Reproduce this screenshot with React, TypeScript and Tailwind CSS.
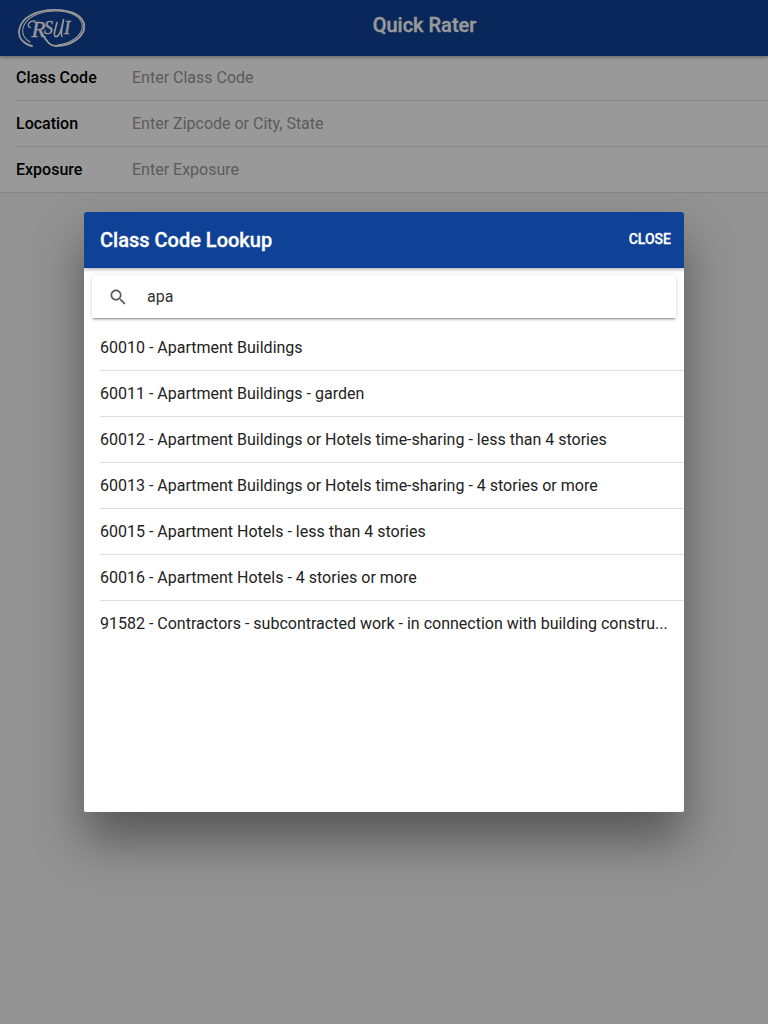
const fields = [
  { label: 'Class Code', placeholder: 'Enter Class Code' },
  { label: 'Location', placeholder: 'Enter Zipcode or City, State' },
  { label: 'Exposure', placeholder: 'Enter Exposure' },
];

const results = [
  '60010 - Apartment Buildings',
  '60011 - Apartment Buildings - garden',
  '60012 - Apartment Buildings or Hotels time-sharing - less than 4 stories',
  '60013 - Apartment Buildings or Hotels time-sharing - 4 stories or more',
  '60015 - Apartment Hotels - less than 4 stories',
  '60016 - Apartment Hotels - 4 stories or more',
  '91582 - Contractors - subcontracted work - in connection with building constru...',
];

function Logo() {
  return (
    <svg width="68" height="40" viewBox="0 0 68 40" fill="none" stroke="#fff" strokeLinecap="round" className="block">
      <path d="M14 38.200C5 35.500 0 29.500 1.200 22C3 9.500 18 1.800 37 1.800C54 1.800 66.300 8 66.300 18.500C66.300 29 53 38 38 38C31 38 28.500 32.500 23.500 25" strokeWidth="1.800" />
      <path d="M12 34C3.800 29 3 22 7 15.500C12 7.500 24 3 38 3C53 3 63.800 9 64.300 17.500C64.800 27 54 35.500 39.500 37" strokeWidth="1.100" />
      <path d="M12.300 19.500C8.500 18.500 10 12.500 17 12.800" strokeWidth="1.300" />
      <g fill="#fff" strokeWidth="0.300" fontFamily="'Liberation Serif', serif" fontStyle="italic">
        <text x="13.500" y="28.500" fontSize="23">R</text>
        <text x="26" y="25.500" fontSize="18">S</text>
        <text x="46" y="26" fontSize="19">I</text>
      </g>
      <path d="M39 14.500C37.700 20 34.500 28.300 37.800 28.600C41.500 28.800 44 20 45.500 11.500M45.300 13C44 20 42.300 27 44 28.500" strokeWidth="1.600" />
    </svg>
  );
}

export default function App() {
  return (
    <div className="relative h-screen w-full overflow-hidden bg-[#f4f4f4] font-['Roboto',sans-serif] text-base">
      <header className="relative z-10 flex h-14 bg-[#0f4296] shadow-[0_1px_4px_rgba(0,0,0,0.4)]">
        <div className="w-[106px] shrink-0 pt-2 pl-[18px]">
          <Logo />
        </div>
        <h1 className="flex-1 pt-[10px] pr-[25px] text-center text-xl leading-[30px] font-medium text-white [-webkit-text-stroke:0.3px_#fff]">Quick Rater</h1>
      </header>
      <form className="border-b border-[#dedede] bg-white">
        {fields.map((field, i) => (
          <div key={field.label} className="pl-4">
            <label className={`flex items-center ${i === 0 ? 'h-[45px] border-b border-[#dedede]' : i === 1 ? 'h-[46px] border-b border-[#dedede]' : 'h-[45px]'}`}>
              <span className="w-[116px] font-medium text-black">{field.label}</span>
              <input className="min-w-0 flex-1 bg-transparent outline-none placeholder:text-[#999]" placeholder={field.placeholder} />
            </label>
          </div>
        ))}
      </form>

      <div className="absolute inset-0 z-20 flex items-center justify-center bg-black/40">
        <section role="dialog" aria-label="Class Code Lookup" className="flex h-[600px] w-[600px] flex-col overflow-hidden rounded-[2px] bg-white shadow-[0_28px_48px_rgba(0,0,0,0.4)]">
          <div className="flex h-14 shrink-0 items-center justify-between bg-[#0f4296] pr-[13px] pl-4 text-white shadow-[0_1px_4px_rgba(0,0,0,0.4)]">
            <h2 className="text-xl font-medium [-webkit-text-stroke:0.3px_#fff]">Class Code Lookup</h2>
            <button type="button" className="pb-[2px] text-sm font-medium [-webkit-text-stroke:0.3px_#fff]">CLOSE</button>
          </div>
          <div className="px-2 pt-2 pb-[7px]">
            <label className="flex h-[42px] items-center rounded-[2px] bg-white pl-4 shadow-[0_2px_2px_0_rgba(0,0,0,0.14),0_3px_1px_-2px_rgba(0,0,0,0.2),0_1px_5px_0_rgba(0,0,0,0.12)]">
              <svg width="20" height="20" viewBox="0 0 512 512" fill="#5b5b5b" className="mr-[19px]">
                <path d="M337.509 305.372h-17.501l-6.571-5.486c20.791-25.232 33.922-57.054 33.922-93.257C347.358 127.632 283.896 64 205.135 64 127.452 64 64 127.632 64 206.629s63.452 142.628 142.225 142.628c35.011 0 67.831-13.167 92.991-34.008l6.561 5.487v17.551L415.180 448 448 415.086 337.509 305.372zm-131.284 0c-54.702 0-98.463-43.887-98.463-98.743 0-54.858 43.761-98.742 98.463-98.742 54.700 0 98.462 43.884 98.462 98.742 0 54.856-43.762 98.743-98.462 98.743z" />
              </svg>
              <input className="min-w-0 flex-1 bg-transparent text-[#333] outline-none" defaultValue="apa" />
            </label>
          </div>
          <ul className="pl-4 text-[#222]">
            {results.map((item) => (
              <li key={item} className="h-[46px] border-b border-[#dedede] last:border-b-0">
                <p className="leading-[45px] whitespace-nowrap">{item}</p>
              </li>
            ))}
          </ul>
        </section>
      </div>
    </div>
  );
}
